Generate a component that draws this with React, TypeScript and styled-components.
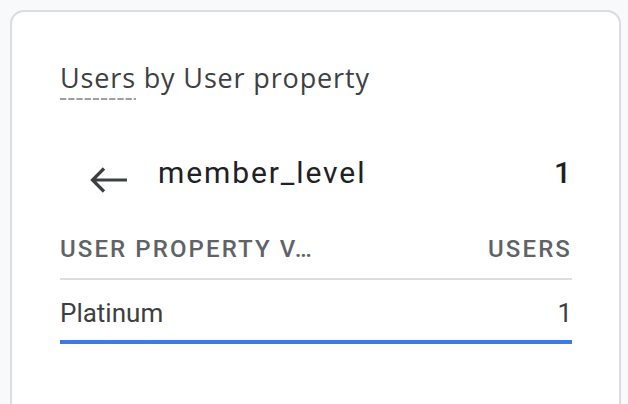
import React from "react";
import styled, { createGlobalStyle } from "styled-components";

const Global = createGlobalStyle`
  html, body { margin: 0; padding: 0; background: #f8f9fa; }
  body { font-family: Roboto, "Liberation Sans", sans-serif; overflow: hidden; }
`;

const Page = styled.div`
  width: 628px;
  height: 404px;
  padding: 10px 7px 0 10px;
  box-sizing: border-box;
  overflow: hidden;
`;

const Card = styled.div`
  background: #fff;
  border: 2px solid #dadce0;
  border-radius: 14px;
  height: 440px;
  box-sizing: border-box;
  padding: 48px 47px 0 48px;
`;

const Title = styled.h2`
  margin: 0;
  font-family: "Open Sans", Roboto, sans-serif;
  font-weight: 400;
  font-size: 27px;
  line-height: 36px;
  letter-spacing: 0.85px;
  color: #3c4043;
`;

const Dashed = styled.span`
  padding-bottom: 4px;
  background-image: linear-gradient(to right, #9aa0a6 6px, transparent 6px);
  background-size: 8.2px 2.5px;
  background-repeat: repeat-x;
  background-position: 0 100%;
`;

const Breadcrumb = styled.div`
  display: flex;
  align-items: center;
  margin-top: 53px;
  height: 48px;
`;

const BackButton = styled.button`
  border: none;
  background: none;
  padding: 14px 0 0;
  margin: 0 30px 0 30px;
  width: 38px;
  display: flex;
  align-items: center;
  justify-content: center;
  color: #3c4043;
  cursor: pointer;
`;

const DimName = styled.span`
  flex: 1;
  font-size: 30px;
  line-height: 48px;
  letter-spacing: 1.9px;
  color: #202124;
  font-weight: 400;
`;

const DimCount = styled.span`
  font-size: 30px;
  line-height: 48px;
  font-weight: 500;
  color: #202124;
  margin-right: 1px;
`;

const Table = styled.div`
  margin-top: 38px;
`;

const HeadRow = styled.div`
  display: flex;
  justify-content: space-between;
  padding-bottom: 15px;
  border-bottom: 2px solid #dadce0;
`;

const HeadCell = styled.span`
  font-size: 24px;
  line-height: 28px;
  font-weight: 500;
  letter-spacing: 2.1px;
  color: #5f6368;
  text-transform: uppercase;
`;

const DataRow = styled.div`
  display: flex;
  justify-content: space-between;
  padding: 18px 0 12px;
  border-bottom: 4px solid #3f7be6;
`;

const Cell = styled.span`
  font-size: 26px;
  line-height: 30px;
  color: #3c4043;
`;

export default function App() {
  return (
    <>
      <Global />
      <Page>
        <Card>
          <Title>
            <Dashed>Users</Dashed> by User property
          </Title>
          <Breadcrumb>
            <BackButton aria-label="Back">
              <svg width="38" height="28" viewBox="0 0 38 28">
                <path
                  d="M37 14H3.5M14 2.5L2.5 14L14 25.5"
                  fill="none"
                  stroke="currentColor"
                  strokeWidth="3.2"
                />
              </svg>
            </BackButton>
            <DimName>member_level</DimName>
            <DimCount>1</DimCount>
          </Breadcrumb>
          <Table>
            <HeadRow>
              <HeadCell>User property v…</HeadCell>
              <HeadCell>Users</HeadCell>
            </HeadRow>
            <DataRow>
              <Cell>Platinum</Cell>
              <Cell>1</Cell>
            </DataRow>
          </Table>
        </Card>
      </Page>
    </>
  );
}
